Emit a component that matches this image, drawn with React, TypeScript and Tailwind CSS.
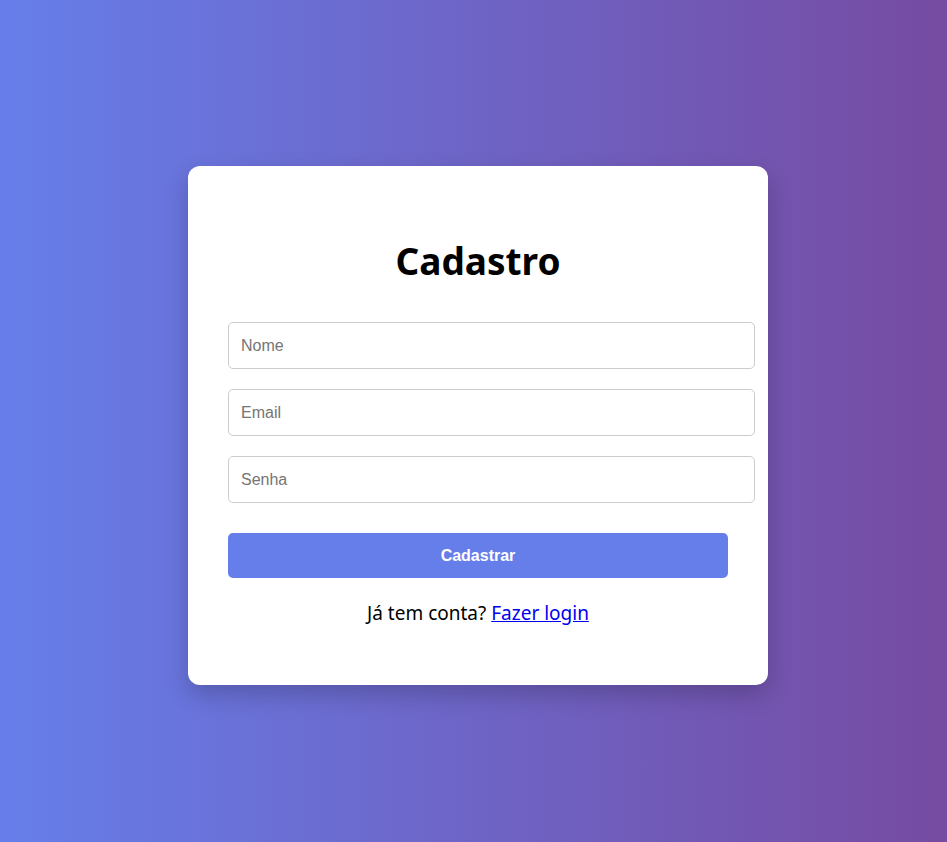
import React from "react";

export default function App() {
  return (
    <div className="w-full min-h-[842px] bg-[linear-gradient(to_right,#667eea,#764ba2)] pt-[166px] pl-[188px]">
      <div className="w-[580px] bg-white rounded-[12px] shadow-[0_10px_25px_rgba(0,0,0,0.2)] px-[40px] pt-[40px] pb-[60px]">
        <h2 className="mt-[33px] mb-[40px] text-center text-[37px] leading-[43px] font-bold text-black [font-family:'Noto_Sans',sans-serif]">
          Cadastro
        </h2>
        <div className="flex flex-col gap-[20px]">
          {["Nome", "Email", "Senha"].map((p) => (
            <input
              key={p}
              type={p === "Senha" ? "password" : p === "Email" ? "email" : "text"}
              placeholder={p}
              className="w-[527px] h-[47px] px-[12px] border border-[#cccccc] rounded-[5px] bg-white text-[16px] text-black placeholder:text-[#757575] outline-none [font-family:'Liberation_Sans',Arial,sans-serif]"
            />
          ))}
        </div>
        <button className="mt-[30px] w-[500px] h-[45px] rounded-[5px] bg-[#667eea] text-white text-[16px] font-bold [font-family:'Liberation_Sans',Arial,sans-serif]">
          Cadastrar
        </button>
        <p className="mt-[23px] text-center text-[19px] leading-[24px] text-black [font-family:'Noto_Sans',sans-serif]">
          Já tem conta?{" "}
          <a href="#" className="text-[#0000ee] underline">
            Fazer login
          </a>
        </p>
      </div>
    </div>
  );
}
